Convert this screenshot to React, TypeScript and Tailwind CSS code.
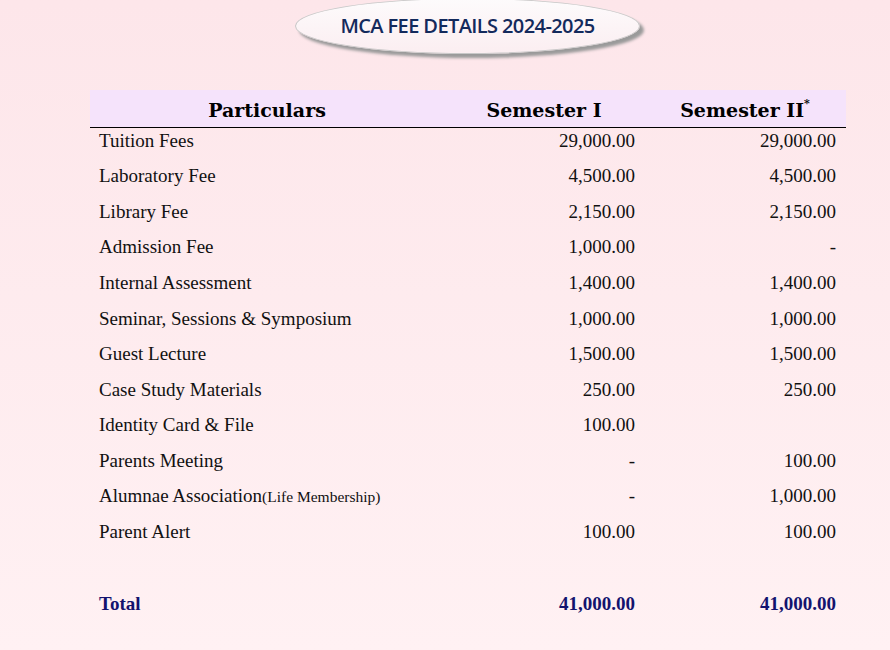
const rows: [string, string, string, string?][] = [
  ["Tuition Fees", "29,000.00", "29,000.00"],
  ["Laboratory Fee", "4,500.00", "4,500.00"],
  ["Library Fee", "2,150.00", "2,150.00"],
  ["Admission Fee", "1,000.00", "-"],
  ["Internal Assessment", "1,400.00", "1,400.00"],
  ["Seminar, Sessions & Symposium", "1,000.00", "1,000.00"],
  ["Guest Lecture", "1,500.00", "1,500.00"],
  ["Case Study Materials", "250.00", "250.00"],
  ["Identity Card & File", "100.00", ""],
  ["Parents Meeting", "-", "100.00"],
  ["Alumnae Association", "-", "1,000.00", "(Life Membership)"],
  ["Parent Alert", "100.00", "100.00"],
];

export default function App() {
  const serif = { fontFamily: '"Liberation Serif", "DejaVu Serif", serif' };
  return (
    <div className="w-[890px] h-[650px] overflow-hidden bg-gradient-to-b from-[#fde6ea] to-[#fff1f3] relative" style={serif}>
      <div className="flex justify-center pl-[45px]">
        <div className="mt-[-2px] w-[345px] h-[56px] rounded-[50%] bg-gradient-to-b from-[#fdfbfc] to-[#fbeef1] border border-[#c8c8c8] shadow-[4px_4px_3px_#9a9a9a] flex items-center justify-center">
          <span className="text-[20px] font-semibold text-[#132a5c] tracking-[-0.6px]" style={{ fontFamily: '"Open Sans", sans-serif' }}>MCA FEE DETAILS 2024-2025</span>
        </div>
      </div>
      <div className="ml-[90px] w-[756px] mt-[36px]">
        <div className="h-[38px] bg-[#f5e3fb] border-b border-black flex items-center text-[19px] font-bold text-black pt-[3px]" style={{ fontFamily: '"DejaVu Serif", serif' }}>
          <div className="w-[354px] text-center">Particulars</div>
          <div className="w-[200px] text-center">Semester I</div>
          <div className="w-[202px] text-center">Semester II<span className="text-[11px] relative top-[-10px]">*</span></div>
        </div>
        <div className="text-[19px] text-[#111]">
          {rows.map(([n, a, b, s], i) => (
            <div key={i} className={`flex items-center h-[35.6px] ${i === 0 ? "mt-[-5px]" : ""}`}>
              <div className="w-[354px] pl-[9px]">{n}{s && <span className="text-[15.5px]">{s}</span>}</div>
              <div className="w-[191px] text-right">{a}</div>
              <div className="w-[201px] text-right">{b}</div>
            </div>
          ))}
          <div className="flex items-center h-[36px] mt-[36px] font-bold text-[#13136e]">
            <div className="w-[354px] pl-[9px]">Total</div>
            <div className="w-[191px] text-right">41,000.00</div>
            <div className="w-[201px] text-right">41,000.00</div>
          </div>
        </div>
      </div>
    </div>
  );
}
